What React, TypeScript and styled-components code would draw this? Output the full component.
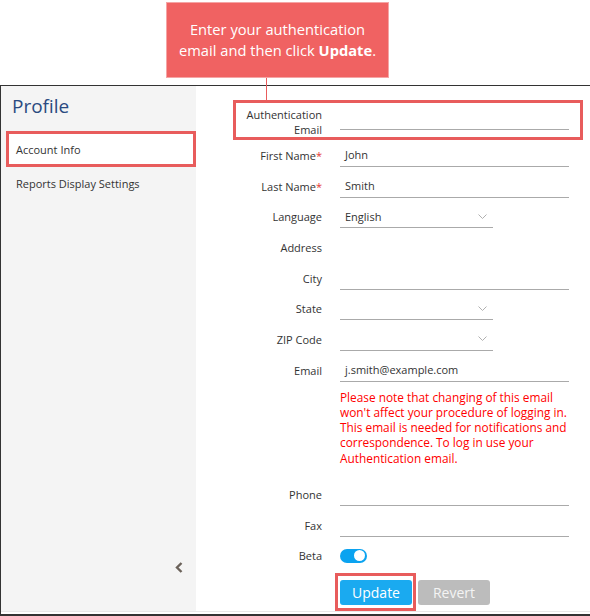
import styled, { createGlobalStyle } from "styled-components";

const GlobalStyle = createGlobalStyle`
  html, body {
    margin: 0;
    padding: 0;
    background: #fff;
  }
  body {
    font-family: "Open Sans", "Liberation Sans", sans-serif;
    color: #333;
  }
`;

const Page = styled.div`
  width: 590px;
  height: 616px;
  display: flex;
  flex-direction: column;
  overflow: hidden;
`;

const Header = styled.div`
  height: 85px;
  padding: 2px 0 0 166px;
  box-sizing: border-box;
`;

const Callout = styled.div`
  position: relative;
  width: 223px;
  height: 76px;
  box-sizing: border-box;
  background: #f06262;
  border: 1px solid #f5a5a5;
  color: #fff;
  font-size: 14.7px;
  line-height: 21px;
  text-align: center;
  display: flex;
  align-items: center;
  justify-content: center;

  &::after {
    content: "";
    position: absolute;
    left: 99px;
    top: 75px;
    width: 1px;
    height: 23px;
    background: #e85c5c;
  }
`;

const Frame = styled.div`
  flex: 1;
  border-top: 1px solid #333;
  border-left: 1px solid #333;
  border-bottom: 2px solid #333;
  padding-bottom: 2px;
  display: flex;
  min-height: 0;
`;

const Panel = styled.div`
  flex: 1;
  display: flex;
  border-bottom: 1px solid #e8e8e8;
`;

const Sidebar = styled.div`
  width: 195px;
  background: #f4f4f4;
  display: flex;
  flex-direction: column;
  padding-top: 7px;
  box-sizing: border-box;
`;

const Title = styled.div`
  font-size: 19px;
  line-height: 26px;
  color: #2a4a80;
  padding-left: 11px;
  margin-bottom: 12px;
`;

const NavItem = styled.div<{ $active?: boolean }>`
  font-size: 11px;
  height: ${(p) => (p.$active ? "36px" : "32px")};
  display: flex;
  align-items: center;
  box-sizing: border-box;
  ${(p) =>
    p.$active
      ? `
    margin-left: 5px;
    background: #fff;
    border: 3px solid #e85c5c;
    padding-left: 7px;
  `
      : `
    padding-left: 15px;
  `}
`;

const Collapse = styled.div`
  align-self: flex-end;
  margin: auto 13px 38px 0;
  display: flex;
`;

const Content = styled.div`
  flex: 1;
  padding-top: 14px;
  display: flex;
  flex-direction: column;
`;

const Highlight = styled.div`
  border: 3px solid #e85c5c;
`;

const AuthBox = styled(Highlight)`
  margin-left: 37px;
  width: 350px;
  height: 40px;
  box-sizing: border-box;
  display: grid;
  grid-template-columns: 86px 229px;
  column-gap: 18px;
  align-items: end;
`;

const AuthLabel = styled.div`
  font-size: 11px;
  line-height: 15px;
  text-align: right;
  margin-bottom: 0.5px;
`;

const Row = styled.div`
  height: 30.7px;
  display: grid;
  grid-template-columns: 126px auto;
  column-gap: 18px;
  align-items: center;
`;

const Label = styled.div`
  font-size: 11px;
  text-align: right;
`;

const Req = styled.span`
  color: #e53935;
`;

const Field = styled.div<{ $narrow?: boolean }>`
  width: ${(p) => (p.$narrow ? "153px" : "229px")};
  height: 23px;
  box-sizing: border-box;
  border-bottom: 1px solid #aaa;
  font-size: 11px;
  padding: 0 6px 0 5px;
  display: flex;
  align-items: center;
  justify-content: space-between;
`;

const AuthField = styled(Field)`
  margin-bottom: 7px;
`;

const Note = styled.div`
  margin: 4px 0 13px 144px;
  color: #f00;
  font-size: 11.85px;
  line-height: 15.3px;
  white-space: nowrap;
`;

const Toggle = styled.div`
  width: 27px;
  height: 14px;
  border-radius: 7px;
  background: #0ba3f0;
  position: relative;

  &::after {
    content: "";
    position: absolute;
    right: 2px;
    top: 1.5px;
    width: 11px;
    height: 11px;
    border-radius: 50%;
    background: #fff;
  }
`;

const Actions = styled.div`
  display: flex;
  align-items: flex-start;
  margin: 2px 0 0 139px;
  gap: 2px;
`;

const ButtonBox = styled(Highlight)`
  padding: 4px 1px 3px 2px;
`;

const Button = styled.button<{ $primary?: boolean }>`
  width: 72px;
  height: 25px;
  border: none;
  border-radius: 3px;
  font-family: "Open Sans", "Liberation Sans", sans-serif;
  font-size: 14px;
  color: ${(p) => (p.$primary ? "#fff" : "#f4f4f4")};
  background: ${(p) => (p.$primary ? "#1aaaf0" : "#bcbcbc")};
  padding: 0;
  cursor: pointer;
`;

const RevertButton = styled(Button)`
  margin-top: 7px;
`;

const Chevron = () => (
  <svg width="9" height="5" viewBox="0 0 9 5">
    <polyline points="0.5,0.5 4.5,4.5 8.5,0.5" fill="none" stroke="#b0b0b0" strokeWidth="1" />
  </svg>
);

const rows: { label: string; req?: boolean; value?: string; kind: "text" | "select" | "none" }[] = [
  { label: "First Name", req: true, value: "John", kind: "text" },
  { label: "Last Name", req: true, value: "Smith", kind: "text" },
  { label: "Language", value: "English", kind: "select" },
  { label: "Address", kind: "none" },
  { label: "City", kind: "text" },
  { label: "State", kind: "select" },
  { label: "ZIP Code", kind: "select" },
  { label: "Email", value: "j.smith@example.com", kind: "text" },
];

const FormRow = ({ label, req, value, kind }: (typeof rows)[number]) => (
  <Row>
    <Label>
      {label}
      {req && <Req>*</Req>}
    </Label>
    {kind === "text" && <Field>{value}</Field>}
    {kind === "select" && (
      <Field $narrow>
        <span>{value}</span>
        <Chevron />
      </Field>
    )}
  </Row>
);

export default function App() {
  return (
    <>
      <GlobalStyle />
      <Page>
        <Header>
          <Callout>
            <div>
              Enter your authentication
              <br />
              email and then click <b>Update</b>.
            </div>
          </Callout>
        </Header>
        <Frame>
          <Panel>
            <Sidebar>
              <Title>Profile</Title>
              <NavItem $active>Account Info</NavItem>
              <NavItem>Reports Display Settings</NavItem>
              <Collapse>
                <svg width="8" height="11" viewBox="0 0 8 11">
                  <polyline
                    points="6.5,1 2,5.5 6.5,10"
                    fill="none"
                    stroke="#6b625a"
                    strokeWidth="2.4"
                  />
                </svg>
              </Collapse>
            </Sidebar>
            <Content>
              <AuthBox>
                <AuthLabel>
                  Authentication
                  <br />
                  Email
                </AuthLabel>
                <AuthField />
              </AuthBox>
              {rows.map((r) => (
                <FormRow key={r.label} {...r} />
              ))}
              <Note>
                Please note that changing of this email
                <br />
                won't affect your procedure of logging in.
                <br />
                This email is needed for notifications and
                <br />
                correspondence. To log in use your
                <br />
                Authentication email.
              </Note>
              <Row>
                <Label>Phone</Label>
                <Field />
              </Row>
              <Row>
                <Label>Fax</Label>
                <Field />
              </Row>
              <Row>
                <Label>Beta</Label>
                <Toggle />
              </Row>
              <Actions>
                <ButtonBox>
                  <Button $primary>Update</Button>
                </ButtonBox>
                <RevertButton>Revert</RevertButton>
              </Actions>
            </Content>
          </Panel>
        </Frame>
      </Page>
    </>
  );
}
